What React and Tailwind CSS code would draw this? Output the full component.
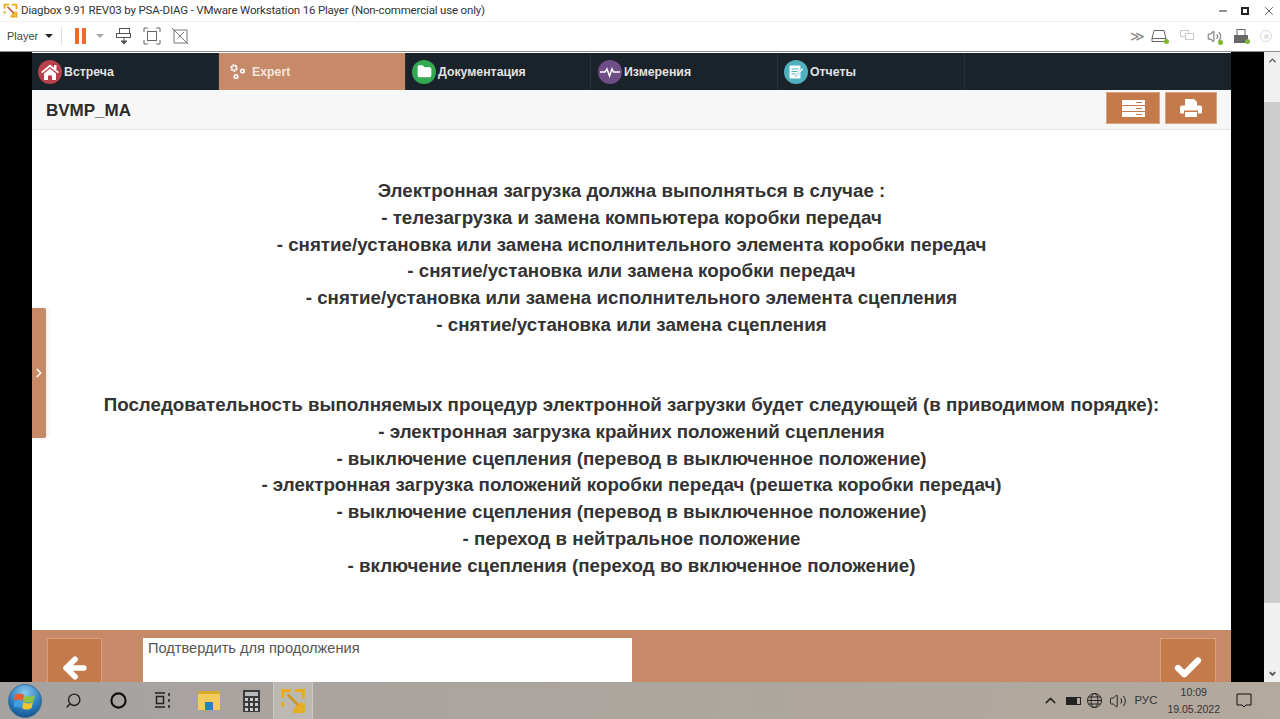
import { ChevronRight, ArrowLeft, Check, Folder, Search, Circle, ChevronUp, Volume2, Minus, X } from 'lucide-react';

const tabs = [
  { label: 'Встреча', color: 'bg-[#b8404a]', w: 'w-[187px]', pl: 'pl-[6px]', icon: <HomeIcon /> },
  { label: 'Expert', active: true, w: 'w-[187px]' },
  { label: 'Документация', color: 'bg-[#34a853]', w: 'w-[185px]', pl: 'pl-[6px]', icon: <Folder size={15} fill="white" stroke="white" /> },
  { label: 'Измерения', color: 'bg-[#6f4d86]', w: 'w-[187px]', pl: 'pl-[7px]', icon: <PulseIcon /> },
  { label: 'Отчеты', color: 'bg-[#4fb0bf]', w: 'w-[187px]', pl: 'pl-[6px]', icon: <ReportIcon /> },
];

const firstBlock = [
  'Электронная загрузка должна выполняться в случае :',
  '- телезагрузка и замена компьютера коробки передач',
  '- снятие/установка или замена исполнительного элемента коробки передач',
  '- снятие/установка или замена коробки передач',
  '- снятие/установка или замена исполнительного элемента сцепления',
  '- снятие/установка или замена сцепления',
];

const secondBlock = [
  'Последовательность выполняемых процедур электронной загрузки будет следующей (в приводимом порядке):',
  '- электронная загрузка крайних положений сцепления',
  '- выключение сцепления (перевод в выключенное положение)',
  '- электронная загрузка положений коробки передач (решетка коробки передач)',
  '- выключение сцепления (перевод в выключенное положение)',
  '- переход в нейтральное положение',
  '- включение сцепления (переход во включенное положение)',
];

function HomeIcon() {
  return (
    <svg width="18" height="16" viewBox="0 0 18 16" fill="white">
      <path d="M9 0.500l9 7.500-1.200 1.300L9 3 1.200 9.300 0 8z" />
      <path d="M3 9.500L9 4.500l6 5V16h-4v-4.500H7V16H3z" />
      <rect x="13" y="1" width="2.500" height="4" />
    </svg>
  );
}

function PulseIcon() {
  return (
    <svg width="20" height="12" viewBox="0 0 20 12" fill="none" stroke="white" strokeWidth="1.5">
      <path d="M0 6h5l2-3 2.500 7 2.500-7 1.500 3H20" />
    </svg>
  );
}

function ReportIcon() {
  return (
    <svg width="16" height="16" viewBox="0 0 16 16" fill="none">
      <rect x="1.500" y="1.500" width="11" height="13" rx="1" fill="white" />
      <path d="M3.500 5h7M3.500 7.500h6M3.500 10h4" stroke="#4fb0bf" strokeWidth="1" />
      <path d="M8 11l6-7 1.300 1.200-6 7-1.800.6z" fill="white" stroke="#4fb0bf" strokeWidth="0.5" />
    </svg>
  );
}

function GearsIcon() {
  return (
    <svg width="17" height="17" viewBox="0 0 17 17" fill="none" stroke="white">
      <circle cx="5" cy="5" r="2.600" strokeWidth="2.200" strokeDasharray="2 0.6" />
      <circle cx="13.500" cy="8" r="1.800" strokeWidth="1.600" />
      <circle cx="7" cy="13.500" r="1.800" strokeWidth="1.600" />
    </svg>
  );
}

function VmwareLogo({ size = 16, center = '#c99a20' }) {
  return (
    <svg width={size} height={size} viewBox="0 0 24 24" fill="none">
      <path d="M1 1h9v3H4v5H1z" fill="#e8ad1e" />
      <path d="M14 1h9v9h-3V4h-6z" fill="#e8ad1e" />
      <path d="M1 13h3v4H1z" fill="#e8ad1e" />
      <path d="M7 6l11 11" stroke={center} strokeWidth="2.500" />
      <path d="M12 23v-3h8v-6h3v9z" fill="#e8ad1e" />
      <path d="M12 20l8-8v8z" fill="#e8ad1e" />
    </svg>
  );
}

function WindowsOrb() {
  return (
    <div className="ml-[8px] w-[34px] h-[34px] rounded-full bg-[radial-gradient(circle_at_50%_25%,#8ccbf0,#2a7cc0_55%,#0d3f73)] border border-[#3d6f96] flex items-center justify-center">
      <svg width="22" height="20" viewBox="0 0 22 20">
        <path d="M1 4c3-2 6-2 9 0l-1.500 6c-3-2-6-2-9 0z" fill="#ea5a2c" />
        <path d="M11 4c3 2 6 2 10 0l-1.500 6c-3 2-7 2-10 0z" fill="#8cc63f" />
        <path d="M0 11c2.500-1.500 6-2 8.500 0L7 17c-3-2-5.500-1.500-8 0z" fill="#3f9fe0" />
        <path d="M9.500 11c3 2 6 2 9.500 0l-1.500 6c-3 2-6.500 2-9.500 0z" fill="#f7c52d" />
      </svg>
    </div>
  );
}

function PlayerToolbar() {
  return (
    <div className="h-[30px] bg-white flex items-center border-b border-[#8a9094] text-[#444] shrink-0 pb-px">
      <span className="ml-[7px] w-[30px] text-[11px]">Player</span>
      <span className="ml-[8px] w-0 h-0 border-x-[4px] border-x-transparent border-t-[4px] border-t-[#222]" />
      <span className="ml-[8px] w-px h-[18px] bg-[#ddd]" />
      <span className="ml-[13px] flex gap-[3px]">
        <span className="w-[4px] h-[16px] bg-[#ee6a2b]" />
        <span className="w-[4px] h-[16px] bg-[#ee6a2b]" />
      </span>
      <span className="ml-[10px] w-0 h-0 border-x-[4px] border-x-transparent border-t-[4px] border-t-[#aaa]" />
      <svg className="ml-[11px]" width="18" height="18" viewBox="0 0 18 18" fill="none" stroke="#555">
        <rect x="4.500" y="1.500" width="10" height="5" />
        <rect x="1.500" y="6.500" width="14" height="4" fill="white" />
        <path d="M9 11v3M6 14h6l-3 3z" fill="#555" />
      </svg>
      <svg className="ml-[10px]" width="18" height="18" viewBox="0 0 18 18" fill="none" stroke="#666">
        <path d="M1 5V1h4M13 1h4v4M17 13v4h-4M5 17H1v-4" />
        <rect x="4.500" y="4.500" width="9" height="9" />
      </svg>
      <svg className="ml-[10px]" width="18" height="18" viewBox="0 0 18 18" fill="none" stroke="#777">
        <path d="M3 3h13v13H3z" />
        <path d="M1 1l16 16M7 11l6-6" />
      </svg>
      <div className="ml-auto mr-[8px] flex items-center gap-[12px]">
        <span className="text-[#888] text-[14px] leading-none tracking-[-2px] w-[9px]">≫</span>
        <span className="relative">
          <svg width="16" height="14" viewBox="0 0 16 14" fill="none" stroke="#666">
            <path d="M3 1.500h10l2 8v3H1v-3zM1 9.500h14" />
          </svg>
          <span className="absolute right-[-2px] bottom-[-1px] w-[5px] h-[5px] rounded-full bg-[#7ab82e]" />
        </span>
        <svg width="16" height="14" viewBox="0 0 16 14" fill="none" stroke="#ccc">
          <rect x="1.500" y="1.500" width="8" height="6" />
          <rect x="6.500" y="4.500" width="8" height="6" fill="white" />
        </svg>
        <span className="relative">
          <Volume2 size={15} stroke="#888" />
          <span className="absolute right-[-1px] bottom-[-1px] w-[5px] h-[5px] rounded-full bg-[#7ab82e]" />
        </span>
        <span className="relative">
          <svg width="14" height="14" viewBox="0 0 14 14">
            <rect x="3" y="0.500" width="8" height="6" fill="white" stroke="#666" />
            <rect x="0" y="6" width="14" height="8" fill="#666" />
          </svg>
          <span className="absolute right-[-2px] bottom-[-1px] w-[5px] h-[5px] rounded-full bg-[#7ab82e]" />
        </span>
        <span className="w-[12px] h-[12px] rounded-full border border-[#ddd] flex items-center justify-center">
          <span className="w-[5px] h-[5px] rounded-full bg-[#e4e4e4]" />
        </span>
      </div>
    </div>
  );
}

function NavBar() {
  return (
    <div className="h-[37px] mt-px bg-[#1a2329] flex shrink-0">
      {tabs.map(t => (
        <div
          key={t.label}
          className={`${t.w} flex items-center border-r border-[#253038] ${t.active ? 'bg-[#c68a69] pl-[10px] gap-[6px]' : `${t.pl} gap-[2px]`}`}
        >
          {t.active ? (
            <GearsIcon />
          ) : (
            <span className={`w-[24px] h-[24px] rounded-full flex items-center justify-center ${t.color}`}>{t.icon}</span>
          )}
          <span className={`mt-[2px] text-[12.300px] font-bold ${t.active ? 'text-[#f3e6dd]' : 'text-[#e2e2e2]'}`}>{t.label}</span>
        </div>
      ))}
    </div>
  );
}

function SubHeader() {
  return (
    <div className="h-[40px] bg-[#f7f7f7] border-b border-[#e6e6e6] flex shrink-0 pl-[14px] pr-[14px]">
      <span className="mt-[10px] text-[17px] leading-[22px] font-bold text-[#2b2b2b]">BVMP_MA</span>
      <div className="ml-auto mt-[2px] flex gap-[5px] h-[32px]">
        <button className="w-[54px] h-[32px] bg-[#c47a4a] border border-[#dba27e] flex flex-col items-center justify-center gap-[1px]">
          <span className="w-[23px] h-[5px] bg-white flex justify-end pr-[3px] pt-[2px]"><span className="w-[6px] h-px bg-[#c47a4a]" /></span>
          <span className="w-[23px] h-[5px] bg-white flex justify-end pr-[3px] pt-[2px]"><span className="w-[6px] h-px bg-[#c47a4a]" /></span>
          <span className="w-[23px] h-[5px] bg-white flex justify-end pr-[3px] pt-[2px]"><span className="w-[6px] h-px bg-[#c47a4a]" /></span>
        </button>
        <button className="w-[52px] h-[32px] bg-[#c47a4a] border border-[#dba27e] flex items-center justify-center">
          <svg width="22" height="20" viewBox="0 0 22 20" fill="white">
            <path d="M5 1h9l3 3v4H5z" />
            <path d="M2 7.500h18a2 2 0 0 1 2 2v5a1 1 0 0 1-1 1h-3v-3H4v3H1a1 1 0 0 1-1-1v-5a2 2 0 0 1 2-2z" />
            <rect x="5" y="14" width="12" height="5" />
          </svg>
        </button>
      </div>
    </div>
  );
}

function Footer() {
  return (
    <div className="h-[52px] bg-[#c68a69] flex items-start pt-[8px] shrink-0 overflow-hidden">
      <button className="ml-[15px] w-[55px] h-[60px] bg-[#c47a4a] border border-[#d89f7e] flex items-center justify-center shrink-0">
        <ArrowLeft size={30} stroke="white" strokeWidth={4.500} />
      </button>
      <div className="ml-[41px] w-[489px] h-[60px] bg-white pl-[5px] text-[14.600px] leading-[20px] text-[#555]">
        Подтвердить для продолжения
      </div>
      <button className="ml-auto mr-[15px] w-[56px] h-[60px] bg-[#c47a4a] border border-[#d89f7e] flex items-center justify-center shrink-0">
        <Check size={30} stroke="white" strokeWidth={5} />
      </button>
    </div>
  );
}

function Taskbar() {
  return (
    <div className="h-[37px] bg-gradient-to-r from-[#a6a2a0] to-[#b3a99d] flex items-center shrink-0 text-[#333]">
      <WindowsOrb />
      <Search size={17} className="ml-[23px] -scale-x-100" stroke="#222" />
      <Circle size={17} className="ml-[28px]" stroke="#111" strokeWidth={3} />
      <svg className="ml-[27px]" width="17" height="17" viewBox="0 0 17 17" fill="none" stroke="#222" strokeWidth="1.500">
        <path d="M1 1h10M1 15h10M2.500 4.500h7v7h-7zM15 1v3M15 7v3M15 13v3" />
      </svg>
      <span className="ml-[27px] relative w-[22px] h-[19px] bg-[#f3cb5b] border-t-[3px] border-[#d9a831] flex items-end justify-center">
        <span className="w-[8px] h-[8px] bg-[#2a80c4]" />
      </span>
      <span className="ml-[23px] w-[17px] h-[22px] bg-[#3b3b3b] flex flex-col items-center pt-[2px] gap-[2px]">
        <span className="w-[13px] h-[4px] bg-[#bbb]" />
        <span className="grid grid-cols-3 gap-[2px]">
          {[...Array(9)].map((_, i) => (
            <span key={i} className="w-[3px] h-[3px] bg-[#ccc]" />
          ))}
        </span>
      </span>
      <div className="ml-[13px] w-[40px] h-[37px] bg-[#bcb8b4] border-x border-[#cbc8c5] flex items-center justify-center">
        <VmwareLogo size={26} />
      </div>
      <div className="ml-auto flex items-center">
        <ChevronUp size={17} stroke="#222" />
        <span className="ml-[7px] w-[15px] h-[8px] border border-[#222] flex">
          <span className="w-[10px] bg-[#222]" />
        </span>
        <svg className="ml-[5px]" width="17" height="17" viewBox="0 0 17 17" fill="none" stroke="#222">
          <circle cx="8.500" cy="8.500" r="7" />
          <ellipse cx="8.500" cy="8.500" rx="3.500" ry="7" />
          <path d="M1.500 8.500h14M2.500 5h12M2.500 12h12" />
        </svg>
        <Volume2 size={18} className="ml-[6px]" stroke="#222" strokeWidth={1.300} />
        <span className="ml-[7px] text-[11.500px]">РУС</span>
        <div className="ml-[10px] flex flex-col items-center text-[10.500px] leading-[17px]">
          <span>10:09</span>
          <span>19.05.2022</span>
        </div>
        <svg className="ml-[16px] mr-[28px]" width="16" height="15" viewBox="0 0 16 15" fill="none" stroke="#111">
          <path d="M1 1h14v11H10l-2 2-2-2H1z" />
        </svg>
      </div>
    </div>
  );
}

export default function App() {
  return (
    <div className="w-[1280px] h-[719px] overflow-hidden flex flex-col bg-black font-['Liberation_Sans',sans-serif]">
      <div className="h-[22px] bg-white border-b border-[#efefef] flex items-center shrink-0 pl-[3px] pr-[4px]">
        <VmwareLogo size={15} center="#c0503a" />
        <span className="ml-[3px] text-[11.500px] tracking-[-0.170px] text-[#333] font-['Roboto',sans-serif]">
          Diagbox 9.91 REV03 by PSA-DIAG - VMware Workstation 16 Player (Non-commercial use only)
        </span>
        <div className="ml-auto flex items-center text-[#222]">
          <Minus size={12} strokeWidth={2} />
          <span className="ml-[12px] w-[8px] h-[8px] border-2 border-[#222]" />
          <X size={14} strokeWidth={1.200} className="ml-[13px]" />
        </div>
      </div>
      <PlayerToolbar />
      <div className="flex flex-1 min-h-0">
        <div className="relative ml-[32px] w-[1199px] bg-white flex flex-col">
          <NavBar />
          <SubHeader />
          <div className="flex-1 pt-[48px] text-center text-[18.750px] leading-[26.750px] font-bold text-[#333] whitespace-nowrap">
            {firstBlock.map(line => (
              <div key={line}>{line}</div>
            ))}
            <div className="h-[53.500px]" />
            {secondBlock.map(line => (
              <div key={line}>{line}</div>
            ))}
          </div>
          <Footer />
          <div className="absolute left-0 top-[256px] w-[14px] h-[130px] bg-[#c68a69] rounded-r-[2px] flex items-center justify-center shadow-[2px_0_4px_rgba(0,0,0,0.08)]">
            <ChevronRight size={16} stroke="#fff6ee" strokeWidth={3} />
          </div>
        </div>
        <div className="ml-[33px] w-[16px] bg-[#f0f0f0] flex flex-col items-center">
          <ChevronUp size={11} className="mt-[3px]" stroke="#555" strokeWidth={3} />
          <div className="mt-[36px] w-full h-[501px] bg-[#cdcdcd]" />
          <svg className="mt-auto mb-[3px] rotate-180" width="11" height="11" viewBox="0 0 24 24" fill="none" stroke="#555" strokeWidth="4">
            <path d="M18 15l-6-6-6 6" />
          </svg>
        </div>
      </div>
      <Taskbar />
    </div>
  );
}
